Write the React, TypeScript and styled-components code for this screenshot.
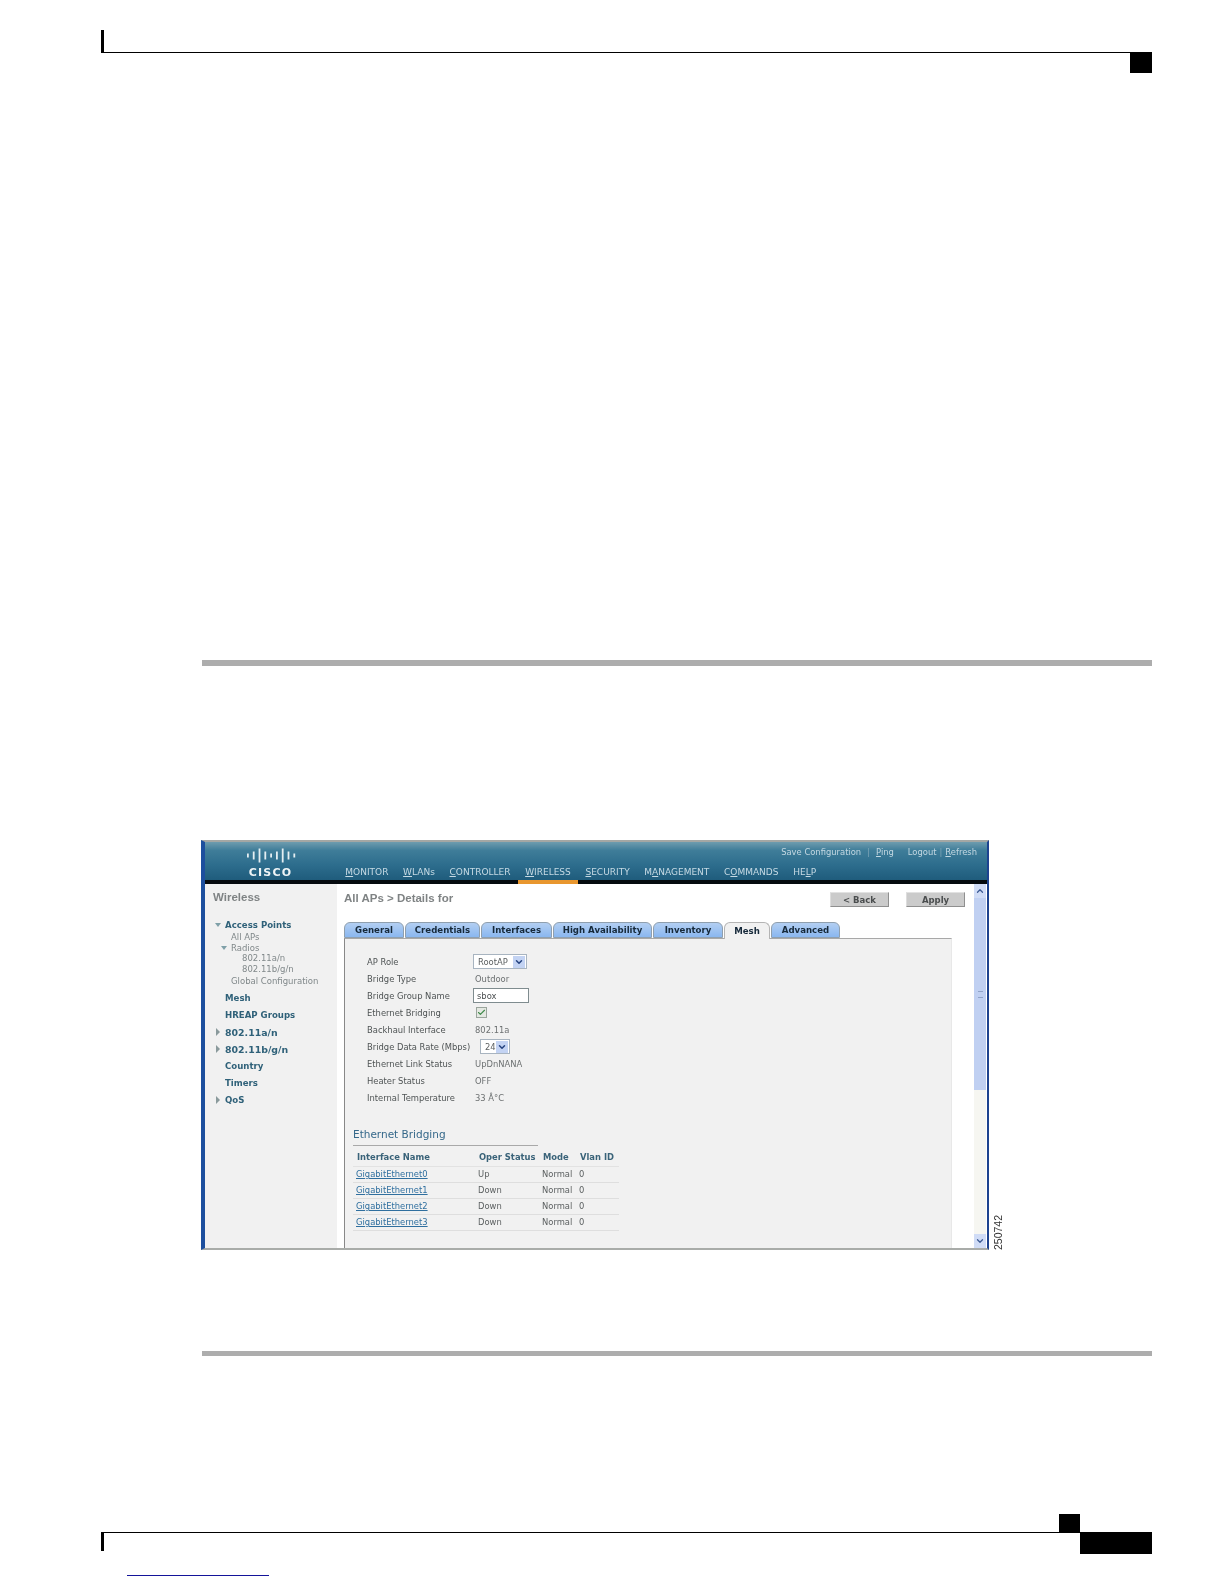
import * as React from "react"
import styled, { createGlobalStyle } from "styled-components"
import { Check, ChevronDown, ChevronUp } from "lucide-react"

const GlobalStyle = createGlobalStyle`
  html, body {
    margin: 0;
    padding: 0;
    background: #ffffff;
  }
`

const Sheet = styled.div`
  width: 1224px;
  height: 1584px;
  box-sizing: border-box;
  padding: 30px 72px 0 101px;
  display: flex;
  flex-direction: column;
  overflow: hidden;
  background: #ffffff;
  font-family: "DejaVu Sans", Verdana, sans-serif;
`

const TopHead = styled.div`
  height: 22px;
  border-left: 3px solid #000000;
  border-bottom: 1px solid #000000;
`

const TopTab = styled.div`
  align-self: flex-end;
  width: 22px;
  height: 20px;
  background: #000000;
`

const Rule = styled.div<{ $top: number; $height: number }>`
  margin: ${(p) => p.$top}px 0 0 101px;
  height: ${(p) => p.$height}px;
  background: #adadad;
`

const FigureRow = styled.div`
  margin: 174px 0 0 100px;
  display: flex;
  align-items: flex-end;
  gap: 4px;
`

const FigureId = styled.div`
  writing-mode: vertical-rl;
  transform: rotate(180deg);
  font-family: "Liberation Sans", Arial, sans-serif;
  font-size: 10.5px;
  line-height: 10px;
  color: #333333;
  filter: blur(0.3px);
`

const Shot = styled.div`
  width: 788px;
  height: 410px;
  box-sizing: border-box;
  display: flex;
  flex-direction: column;
  border-top: 2px solid #a4a7a4;
  border-bottom: 2px solid #a9aca9;
  border-left: 4px solid #1d4f9e;
  border-right: 2px solid #1d4390;
  background: #ffffff;
  filter: blur(0.7px);
`

const Header = styled.div`
  height: 38px;
  display: flex;
  background: linear-gradient(#6e9cae 0, #3f7d99 22%, #2d6d8d 60%, #1f5c7c 100%);
  border-bottom: 4px solid #050a0e;
`

const LogoBox = styled.div`
  width: 133px;
  flex: none;
  display: flex;
  flex-direction: column;
  align-items: center;
  padding: 6px 2px 0 0;
  box-sizing: border-box;
`

const LogoWord = styled.div`
  font-size: 11px;
  line-height: 12px;
  font-weight: bold;
  letter-spacing: 1.2px;
  color: #eef4f6;
  margin-top: 4px;
`

const HeaderRight = styled.div`
  flex: 1;
  display: flex;
  flex-direction: column;
`

const TopLinks = styled.div`
  height: 21px;
  padding: 0 10px 1px 0;
  box-sizing: border-box;
  display: flex;
  justify-content: flex-end;
  align-items: center;
  font-size: 8.4px;
  color: #c3d8e2;
`

const TopLink = styled.span<{ $after?: number }>`
  margin-right: ${(p) => p.$after ?? 0}px;
`

const Pipe = styled.span<{ $space: number }>`
  margin: 0 ${(p) => p.$space}px;
  color: #7fa6b8;
`

const NavRow = styled.div`
  height: 17px;
  display: flex;
`

const NavItem = styled.div<{ $active?: boolean }>`
  height: 17px;
  margin-bottom: -4px;
  padding: 0 7.35px;
  box-sizing: content-box;
  display: flex;
  align-items: center;
  font-size: 9px;
  white-space: pre;
  color: #c6dae4;
  border-bottom: 4px solid ${(p) => (p.$active ? "#e8962e" : "transparent")};
`

const Body = styled.div`
  flex: 1;
  min-height: 0;
  display: flex;
`

const Sidebar = styled.div`
  width: 132px;
  flex: none;
  background: #f1f1f1;
  color: #7a7f80;
`

const SideTitle = styled.div`
  height: 26px;
  margin-bottom: 6px;
  padding-left: 8px;
  display: flex;
  align-items: center;
  font-family: "Liberation Sans", Arial, sans-serif;
  font-size: 11.5px;
  font-weight: bold;
  color: #7f8384;
`

const SideItem = styled.div`
  height: 17px;
  display: flex;
  align-items: center;
  font-size: 8.6px;
  font-weight: bold;
  color: #2f6179;
`

const SideWide = styled(SideItem)`
  font-size: 9.4px;
`

const ArrowSlot = styled.div<{ $left: number }>`
  width: 10px;
  margin-left: ${(p) => p.$left}px;
  flex: none;
  display: flex;
  align-items: center;
`

const ArrowDown = styled.span`
  width: 0;
  height: 0;
  border-left: 3.5px solid transparent;
  border-right: 3.5px solid transparent;
  border-top: 4px solid #7fa0a8;
`

const ArrowRight = styled.span`
  margin-left: 1px;
  width: 0;
  height: 0;
  border-top: 4px solid transparent;
  border-bottom: 4px solid transparent;
  border-left: 4px solid #8a9a9c;
`

const SubList = styled.div`
  margin: -1px 0 4px;
`

const SubItem = styled.div<{ $indent: number; $gap?: number }>`
  height: 10.6px;
  margin-top: ${(p) => p.$gap ?? 0}px;
  padding-left: ${(p) => p.$indent}px;
  display: flex;
  align-items: center;
  font-size: 8.5px;
  color: #80888a;
`

const SubArrow = styled.div`
  width: 10px;
  margin-left: -10px;
  display: flex;
`

const Main = styled.div`
  flex: 1;
  min-width: 0;
  display: flex;
  flex-direction: column;
  padding-left: 7px;
`

const TitleRow = styled.div`
  height: 38px;
  padding: 7px 9px 0 0;
  box-sizing: border-box;
  display: flex;
  align-items: flex-start;
`

const PageTitle = styled.div`
  flex: 1;
  line-height: 15px;
  font-family: "Liberation Sans", Arial, sans-serif;
  font-size: 11.5px;
  font-weight: bold;
  color: #7f8384;
`

const ButtonGroup = styled.div`
  display: flex;
  gap: 17px;
  margin-top: 1px;
`

const GrayButton = styled.div`
  width: 59px;
  height: 15px;
  box-sizing: border-box;
  display: flex;
  align-items: center;
  justify-content: center;
  background: #cbcbcb;
  border-top: 1px solid #e2e2e2;
  border-left: 1px solid #dddddd;
  border-right: 1px solid #8f8f8f;
  border-bottom: 1px solid #8f8f8f;
  font-size: 8.5px;
  font-weight: bold;
  color: #4a4d4e;
`

const TabRow = styled.div`
  height: 16px;
  display: flex;
  gap: 1px;
  position: relative;
  z-index: 1;
`

const Tab = styled.div<{ $width: number; $active?: boolean }>`
  width: ${(p) => p.$width}px;
  height: ${(p) => (p.$active ? 17 : 16)}px;
  box-sizing: border-box;
  display: flex;
  align-items: center;
  justify-content: center;
  border-radius: 6px 6px 0 0;
  border: 1px solid ${(p) => (p.$active ? "#b4b4b4" : "#8f9fae")};
  border-bottom: ${(p) => (p.$active ? "none" : "1px solid #8f9fae")};
  background: ${(p) => (p.$active ? "#f1f1f1" : "linear-gradient(#b3cff2, #8ab7f0)")};
  font-size: 8.6px;
  font-weight: bold;
  color: #16293a;
`

const Panel = styled.div`
  flex: 1;
  min-height: 0;
  width: 608px;
  box-sizing: border-box;
  padding: 14px 0 0 8px;
  background: #f1f1f1;
  border-top: 1px solid #a8a8a8;
  border-left: 1px solid #888888;
  border-right: 1px solid #e8e8e8;
`

const FormGrid = styled.div`
  margin-left: 14px;
  display: grid;
  grid-template-columns: 108px 1fr;
  grid-auto-rows: 17px;
  align-items: center;
  font-size: 8.4px;
`

const FieldLabel = styled.div`
  color: #4e5354;
  white-space: nowrap;
`

const FieldValue = styled.div`
  color: #6c7071;
  display: flex;
  align-items: center;
`

const SelectBox = styled.div<{ $width: number; $shift: number }>`
  width: ${(p) => p.$width}px;
  height: 15px;
  margin-left: ${(p) => p.$shift}px;
  box-sizing: border-box;
  display: flex;
  align-items: center;
  justify-content: space-between;
  padding: 0 1px 0 4px;
  background: #ffffff;
  border: 1px solid #a8b4c0;
  color: #5a5e5f;
`

const SelectArrow = styled.div`
  width: 12px;
  height: 12px;
  display: flex;
  align-items: center;
  justify-content: center;
  background: #c3d3f3;
  color: #24427f;
`

const TextBox = styled.div`
  width: 56px;
  height: 15px;
  margin-left: -2px;
  box-sizing: border-box;
  padding-left: 3px;
  display: flex;
  align-items: center;
  background: #ffffff;
  border: 1px solid #7f8c8f;
  color: #4a4e4f;
`

const CheckBox = styled.div`
  width: 11px;
  height: 11px;
  margin-left: 1px;
  box-sizing: border-box;
  display: flex;
  align-items: center;
  justify-content: center;
  background: #e4e8e2;
  border: 1px solid #9aa59c;
  color: #3f8a4a;
`

const SectionTitle = styled.div`
  width: 185px;
  height: 20px;
  margin-top: 20px;
  padding-bottom: 3px;
  box-sizing: border-box;
  display: flex;
  align-items: center;
  border-bottom: 1px solid #a9a9a9;
  font-size: 10.5px;
  color: #35688a;
`

const BridgeTable = styled.table`
  width: 266px;
  table-layout: fixed;
  border-collapse: collapse;
  font-size: 8.4px;
`

const HeadCell = styled.th<{ $width: number }>`
  width: ${(p) => p.$width}px;
  height: 20px;
  box-sizing: border-box;
  padding: 3px 0 0 4px;
  text-align: left;
  white-space: nowrap;
  font-weight: bold;
  color: #3a6379;
  border-bottom: 1px solid #e2e2e2;
`

const Cell = styled.td`
  height: 15px;
  padding: 0 0 0 3px;
  white-space: nowrap;
  color: #5c6061;
  border-bottom: 1px solid #dedede;
`

const NameLink = styled.span`
  color: #2f6f9f;
  text-decoration: underline;
`

const Scrollbar = styled.div`
  width: 12px;
  margin-right: 1px;
  flex: none;
  display: flex;
  flex-direction: column;
  background: #f6f6f1;
`

const ScrollButton = styled.div`
  height: 14px;
  flex: none;
  display: flex;
  align-items: center;
  justify-content: center;
  background: #d0dcf6;
  color: #3c5a94;
`

const ScrollThumb = styled.div`
  height: 192px;
  flex: none;
  display: flex;
  align-items: center;
  justify-content: center;
  background: #c0d0f2;
`

const ThumbGrip = styled.div`
  width: 5px;
  height: 5px;
  border-top: 1px solid #8fa3c8;
  border-bottom: 1px solid #8fa3c8;
`

const ScrollTrack = styled.div`
  flex: 1;
`

const FootTop = styled.div`
  margin-top: 158px;
  height: 18px;
  display: flex;
  justify-content: flex-end;
  border-bottom: 1px solid #000000;
`

const FootSquare = styled.div`
  width: 21px;
  height: 18px;
  margin-right: 72px;
  background: #000000;
`

const FootBottom = styled.div`
  margin-top: -1px;
  display: flex;
  justify-content: space-between;
  align-items: flex-start;
`

const FootBar = styled.div`
  width: 3px;
  height: 19px;
  background: #000000;
`

const FootBlock = styled.div`
  width: 72px;
  height: 22px;
  background: #000000;
`

const StrayLink = styled.div`
  align-self: flex-start;
  width: 142px;
  height: 1px;
  margin: 21px 0 0 26px;
  background: #14149a;
`

const CiscoBars = () => {
  const heights = [4, 8, 14, 8, 4, 8, 14, 8, 4]
  return (
    <svg width="50" height="15" viewBox="0 0 50 15">
      {heights.map((h, i) => (
        <rect key={i} x={1 + i * 5.8} y={(15 - h) / 2} width="1.8" height={h} fill="#e4eef2" />
      ))}
    </svg>
  )
}

// [before, underlined letter, after]
const navItems = [
  ["", "M", "ONITOR"],
  ["", "W", "LANs"],
  ["", "C", "ONTROLLER"],
  ["", "W", "IRELESS"],
  ["", "S", "ECURITY"],
  ["M", "A", "NAGEMENT"],
  ["C", "O", "MMANDS"],
  ["HE", "L", "P"],
]

const tabs: [string, number][] = [
  ["General", 60],
  ["Credentials", 75],
  ["Interfaces", 71],
  ["High Availability", 99],
  ["Inventory", 70],
  ["Mesh", 46],
  ["Advanced", 69],
]

const ports = [
  ["GigabitEthernet0", "Up"],
  ["GigabitEthernet1", "Down"],
  ["GigabitEthernet2", "Down"],
  ["GigabitEthernet3", "Down"],
]

export default function App() {
  return (
    <Sheet>
      <GlobalStyle />
      <TopHead />
      <TopTab />
      <Rule $top={587} $height={6} />

      <FigureRow>
        <Shot>
          <Header>
            <LogoBox>
              <CiscoBars />
              <LogoWord>CISCO</LogoWord>
            </LogoBox>
            <HeaderRight>
              <TopLinks>
                <TopLink>Save Configuration</TopLink>
                <Pipe $space={6}>|</Pipe>
                <TopLink $after={14}><u>P</u>ing</TopLink>
                <TopLink>Logout</TopLink>
                <Pipe $space={3}>|</Pipe>
                <TopLink><u>R</u>efresh</TopLink>
              </TopLinks>
              <NavRow>
                {navItems.map(([a, key, b]) => (
                  <NavItem key={a + key + b} $active={key + b === "WIRELESS"}>
                    {a}<u>{key}</u>{b}
                  </NavItem>
                ))}
              </NavRow>
            </HeaderRight>
          </Header>

          <Body>
            <Sidebar>
              <SideTitle>Wireless</SideTitle>
              <SideItem>
                <ArrowSlot $left={10}><ArrowDown /></ArrowSlot>
                Access Points
              </SideItem>
              <SubList>
                <SubItem $indent={26}>All APs</SubItem>
                <SubItem $indent={26}>
                  <SubArrow><ArrowDown /></SubArrow>
                  Radios
                </SubItem>
                <SubItem $indent={37}>802.11a/n</SubItem>
                <SubItem $indent={37}>802.11b/g/n</SubItem>
                <SubItem $indent={26} $gap={1}>Global Configuration</SubItem>
              </SubList>
              <SideItem><ArrowSlot $left={10} />Mesh</SideItem>
              <SideItem><ArrowSlot $left={10} />HREAP Groups</SideItem>
              <SideWide><ArrowSlot $left={10}><ArrowRight /></ArrowSlot>802.11a/n</SideWide>
              <SideWide><ArrowSlot $left={10}><ArrowRight /></ArrowSlot>802.11b/g/n</SideWide>
              <SideItem><ArrowSlot $left={10} />Country</SideItem>
              <SideItem><ArrowSlot $left={10} />Timers</SideItem>
              <SideItem><ArrowSlot $left={10}><ArrowRight /></ArrowSlot>QoS</SideItem>
            </Sidebar>

            <Main>
              <TitleRow>
                <PageTitle>All APs &gt; Details for</PageTitle>
                <ButtonGroup>
                  <GrayButton>&lt; Back</GrayButton>
                  <GrayButton>Apply</GrayButton>
                </ButtonGroup>
              </TitleRow>

              <TabRow>
                {tabs.map(([name, width]) => (
                  <Tab key={name} $width={width} $active={name === "Mesh"}>{name}</Tab>
                ))}
              </TabRow>

              <Panel>
                <FormGrid>
                  <FieldLabel>AP Role</FieldLabel>
                  <FieldValue>
                    <SelectBox $width={54} $shift={-2}>
                      RootAP
                      <SelectArrow><ChevronDown size={10} strokeWidth={3.5} /></SelectArrow>
                    </SelectBox>
                  </FieldValue>
                  <FieldLabel>Bridge Type</FieldLabel>
                  <FieldValue>Outdoor</FieldValue>
                  <FieldLabel>Bridge Group Name</FieldLabel>
                  <FieldValue><TextBox>sbox</TextBox></FieldValue>
                  <FieldLabel>Ethernet Bridging</FieldLabel>
                  <FieldValue>
                    <CheckBox><Check size={9} strokeWidth={3} /></CheckBox>
                  </FieldValue>
                  <FieldLabel>Backhaul Interface</FieldLabel>
                  <FieldValue>802.11a</FieldValue>
                  <FieldLabel>Bridge Data Rate (Mbps)</FieldLabel>
                  <FieldValue>
                    <SelectBox $width={30} $shift={5}>
                      24
                      <SelectArrow><ChevronDown size={10} strokeWidth={3.5} /></SelectArrow>
                    </SelectBox>
                  </FieldValue>
                  <FieldLabel>Ethernet Link Status</FieldLabel>
                  <FieldValue>UpDnNANA</FieldValue>
                  <FieldLabel>Heater Status</FieldLabel>
                  <FieldValue>OFF</FieldValue>
                  <FieldLabel>Internal Temperature</FieldLabel>
                  <FieldValue>33 Â°C</FieldValue>
                </FormGrid>

                <SectionTitle>Ethernet Bridging</SectionTitle>
                <BridgeTable>
                  <thead>
                    <tr>
                      <HeadCell $width={122}>Interface Name</HeadCell>
                      <HeadCell $width={64}>Oper Status</HeadCell>
                      <HeadCell $width={37}>Mode</HeadCell>
                      <HeadCell $width={43}>Vlan ID</HeadCell>
                    </tr>
                  </thead>
                  <tbody>
                    {ports.map(([name, status]) => (
                      <tr key={name}>
                        <Cell><NameLink>{name}</NameLink></Cell>
                        <Cell>{status}</Cell>
                        <Cell>Normal</Cell>
                        <Cell>0</Cell>
                      </tr>
                    ))}
                  </tbody>
                </BridgeTable>
              </Panel>
            </Main>

            <Scrollbar>
              <ScrollButton><ChevronUp size={10} strokeWidth={3} /></ScrollButton>
              <ScrollThumb><ThumbGrip /></ScrollThumb>
              <ScrollTrack />
              <ScrollButton><ChevronDown size={10} strokeWidth={3} /></ScrollButton>
            </Scrollbar>
          </Body>
        </Shot>
        <FigureId>250742</FigureId>
      </FigureRow>

      <Rule $top={101} $height={5} />

      <FootTop><FootSquare /></FootTop>
      <FootBottom>
        <FootBar />
        <FootBlock />
      </FootBottom>
      <StrayLink />
    </Sheet>
  )
}
